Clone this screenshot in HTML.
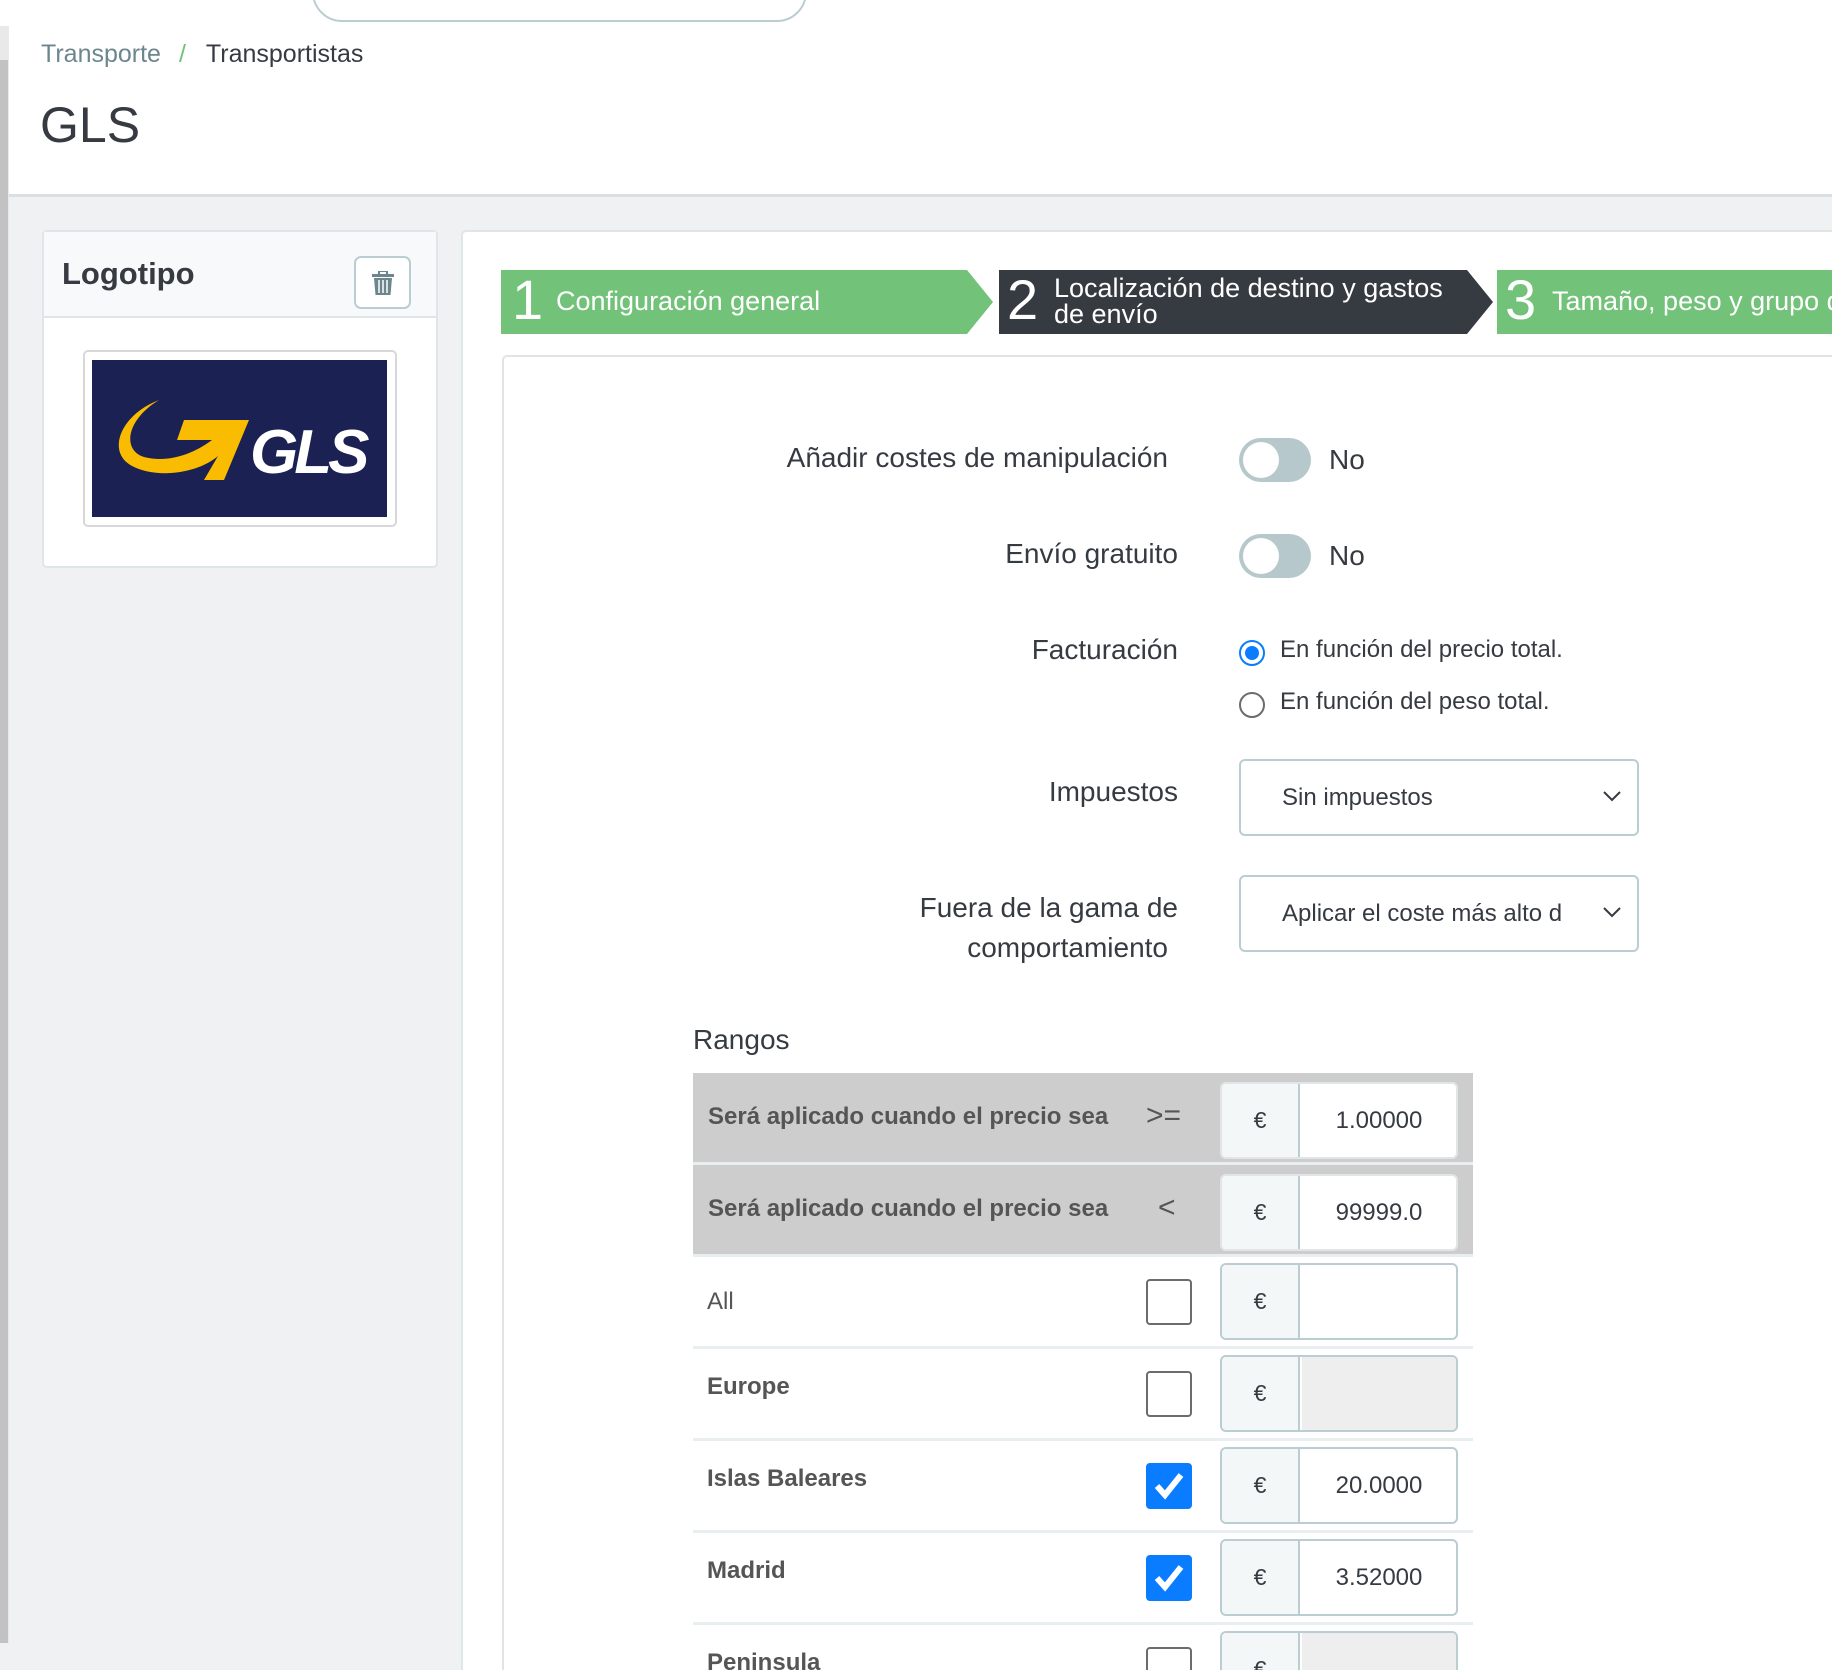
<!DOCTYPE html>
<html><head><meta charset="utf-8"><style>
*{margin:0;padding:0;box-sizing:border-box}
html{width:1832px;height:1670px;overflow:hidden}
body{width:1832px;height:1670px;position:relative;overflow:hidden;background:#eff1f2;font-family:"Liberation Sans",sans-serif;color:#363a41}
.a{position:absolute}
.lbl{position:absolute;font-size:28px;color:#363a41;white-space:nowrap}
.tog{position:absolute;width:72px;height:44px;border-radius:22px;background:#b7c8cd}
.tog:after{content:"";position:absolute;left:4px;top:4px;width:36px;height:36px;border-radius:50%;background:#fff}
.sel{position:absolute;left:1239px;width:400px;height:77px;border:2px solid #bbcdd2;border-radius:6px;background:#fff;font-size:24px;padding:0 0 0 41px;line-height:73px;color:#363a41;white-space:nowrap;overflow:hidden}
.sel svg{position:absolute;right:16px;top:30px}
.row{position:absolute;left:693px;width:780px;border-bottom:3px solid #e9eef0;font-size:24px}
.ig{position:absolute;left:527px;width:238px;height:77px;border:2px solid #bbcdd2;border-radius:6px;overflow:hidden;background:#fff}
.ig .e{position:absolute;left:0;top:0;width:78px;height:100%;background:#f4f7f8;border-right:2px solid #bbcdd2;text-align:center;line-height:73px;font-size:23px}
.ig .v{position:absolute;left:80px;right:0;top:0;bottom:0;line-height:73px;text-align:center;font-size:24px;overflow:hidden}
.cb{position:absolute;left:453px;width:46px;height:46px;border:2px solid #6c6c6c;border-radius:4px;background:#fff}
.cb.on{background:#0a7cff;border-color:#0a7cff}
</style></head><body>
<div class="a" style="left:0;top:0;width:1832px;height:197px;background:#fff;border-bottom:3px solid #dcdfe1"></div>
<div class="a" style="left:312px;top:-40px;width:495px;height:62px;border:2px solid #bbcdd2;border-radius:30px;background:#fff"></div>
<div class="a" style="left:0;top:26px;width:9px;height:1617px;background:#e9e9e9"></div>
<div class="a" style="left:0;top:60px;width:8px;height:1583px;background:#c2c2c2"></div>
<div class="a" style="left:41px;top:40px;font-size:25px;white-space:nowrap"><span style="color:#6c868e">Transporte</span><span style="color:#72c279;margin:0 20px 0 18px">/</span><span style="color:#363a41">Transportistas</span></div>
<div class="a" style="left:40px;top:96px;font-size:50px;color:#363a41">GLS</div>

<div class="a" style="left:42px;top:230px;width:396px;height:338px;background:#fff;border:2px solid #dfe6e8;border-radius:5px"></div>
<div class="a" style="left:44px;top:232px;width:392px;height:86px;background:#f7f9fb;border-bottom:2px solid #dfe6e8"></div>
<div class="a" style="left:62px;top:256px;font-size:31px;color:#363a41;font-weight:bold">Logotipo</div>
<div class="a" style="left:354px;top:256px;width:57px;height:53px;border:2px solid #bbcdd2;border-radius:7px;background:#fff">
<svg width="22" height="24" viewBox="0 0 22 24" style="position:absolute;left:16px;top:13px"><rect x="0" y="3" width="22" height="3" fill="#6c868e"/><rect x="7" y="0" width="8" height="4" fill="none" stroke="#6c868e" stroke-width="2"/><path d="M2 7h18l-1.5 17h-15z" fill="#6c868e"/><path d="M7 9v13M11 9v13M15 9v13" stroke="#fff" stroke-width="1.5"/></svg></div>
<div class="a" style="left:83px;top:350px;width:314px;height:177px;border:2px solid #d8d8d8;border-radius:5px;background:#fff"></div>
<svg class="a" style="left:92px;top:360px" width="295" height="157" viewBox="0 0 295 157">
<rect width="295" height="157" fill="#1b2152"/>
<path d="M67,40 C28,55 14,92 40,106 C67,120 108,112 126,96 L112,120 L132,120 L157,60 L92,60 L85,80 L120,80 C100,95 75,103 52,97 C30,90 34,60 67,40 Z" fill="#f9bc00"/>
<text x="158" y="113" font-family="Liberation Sans,sans-serif" font-size="62" font-weight="bold" font-style="italic" fill="#fff" letter-spacing="-4">GLS</text>
</svg>

<div class="a" style="left:461px;top:230px;width:1380px;height:1460px;background:#fff;border:2px solid #dfe6e8;border-radius:5px"></div>
<svg class="a" style="left:501px;top:270px" width="1331" height="64">
<polygon points="0,0 466,0 492,32 466,64 0,64" fill="#72c279"/>
<polygon points="498,0 966,0 992,32 966,64 498,64" fill="#363a41"/>
<polygon points="996,0 1331,0 1331,64 996,64" fill="#72c279"/>
</svg>
<div class="a" style="left:512px;top:268px;font-size:56px;color:#fff;line-height:64px">1</div>
<div class="a" style="left:556px;top:286px;font-size:27px;color:#fff">Configuración general</div>
<div class="a" style="left:1007px;top:268px;font-size:56px;color:#fff;line-height:64px">2</div>
<div class="a" style="left:1054px;top:275px;font-size:27px;color:#fff;line-height:26px;white-space:nowrap">Localización de destino y gastos<br>de envío</div>
<div class="a" style="left:1505px;top:268px;font-size:56px;color:#fff;line-height:64px">3</div>
<div class="a" style="left:1552px;top:286px;font-size:27px;color:#fff;white-space:nowrap">Tamaño, peso y grupo de</div>
<div class="a" style="left:502px;top:355px;width:1340px;height:1340px;border:2px solid #e3e3e3;border-radius:5px"></div>

<div class="lbl" style="right:664px;top:442px">Añadir costes de manipulación</div>
<div class="tog" style="left:1239px;top:438px"></div>
<div class="lbl" style="left:1329px;top:444px">No</div>
<div class="lbl" style="right:654px;top:538px">Envío gratuito</div>
<div class="tog" style="left:1239px;top:534px"></div>
<div class="lbl" style="left:1329px;top:540px">No</div>
<div class="lbl" style="right:654px;top:634px">Facturación</div>
<div class="a" style="left:1239px;top:640px;width:26px;height:26px;border:2px solid #0a7cff;border-radius:50%"><div style="margin:4px;width:14px;height:14px;border-radius:50%;background:#0a7cff"></div></div>
<div class="a" style="left:1280px;top:636px;font-size:24px">En función del precio total.</div>
<div class="a" style="left:1239px;top:692px;width:26px;height:26px;border:2px solid #6c6c6c;border-radius:50%"></div>
<div class="a" style="left:1280px;top:688px;font-size:24px">En función del peso total.</div>
<div class="lbl" style="right:654px;top:776px">Impuestos</div>
<div class="sel" style="top:759px">Sin impuestos<svg width="18" height="12"><path d="M1 1l8 8 8-8" fill="none" stroke="#363a41" stroke-width="2"/></svg></div>
<div class="lbl" style="right:654px;top:892px">Fuera de la gama de</div>
<div class="lbl" style="right:664px;top:932px">comportamiento</div>
<div class="sel" style="top:875px">Aplicar el coste más alto d<svg width="18" height="12"><path d="M1 1l8 8 8-8" fill="none" stroke="#363a41" stroke-width="2"/></svg></div>
<div class="lbl" style="left:693px;top:1024px">Rangos</div>

<div class="row" style="top:1073px;height:92px;background:#cdcdcd;border-bottom:3px solid #e9eef0">
<div class="a" style="left:15px;top:30px;font-weight:bold;color:#555">Será aplicado cuando el precio sea</div>
<div class="a" style="left:453px;top:26px;font-size:30px;color:#555">&gt;=</div>
<div class="ig" style="top:9px;border-color:#e0e6e8"><div class="e">€</div><div class="v">1.00000</div></div></div>
<div class="row" style="top:1165px;height:92px;background:#cdcdcd">
<div class="a" style="left:15px;top:30px;font-weight:bold;color:#555">Será aplicado cuando el precio sea</div>
<div class="a" style="left:465px;top:26px;font-size:30px;color:#555">&lt;</div>
<div class="ig" style="top:9px;border-color:#e0e6e8"><div class="e">€</div><div class="v">99999.0</div></div></div>

<div class="row" style="top:1257px;height:92px"><div class="a" style="left:14px;top:31px;color:#555">All</div><div class="cb" style="top:22px"></div><div class="ig" style="top:6px"><div class="e">€</div><div class="v"></div></div></div>
<div class="row" style="top:1349px;height:92px"><div class="a" style="left:14px;top:24px;font-weight:bold;color:#555">Europe</div><div class="cb" style="top:22px"></div><div class="ig" style="top:6px"><div class="e">€</div><div class="v" style="background:#eee"></div></div></div>
<div class="row" style="top:1441px;height:92px"><div class="a" style="left:14px;top:24px;font-weight:bold;color:#555">Islas Baleares</div><div class="cb on" style="top:22px"><svg width="42" height="42"><path d="M9 21l8 9 16-20" fill="none" stroke="#fff" stroke-width="6"/></svg></div><div class="ig" style="top:6px"><div class="e">€</div><div class="v">20.0000</div></div></div>
<div class="row" style="top:1533px;height:92px"><div class="a" style="left:14px;top:24px;font-weight:bold;color:#555">Madrid</div><div class="cb on" style="top:22px"><svg width="42" height="42"><path d="M9 21l8 9 16-20" fill="none" stroke="#fff" stroke-width="6"/></svg></div><div class="ig" style="top:6px"><div class="e">€</div><div class="v">3.52000</div></div></div>
<div class="row" style="top:1625px;height:92px;border:none"><div class="a" style="left:14px;top:24px;font-weight:bold;color:#555">Peninsula</div><div class="cb" style="top:22px"></div><div class="ig" style="top:6px"><div class="e">€</div><div class="v" style="background:#eee"></div></div></div>
</body></html>
